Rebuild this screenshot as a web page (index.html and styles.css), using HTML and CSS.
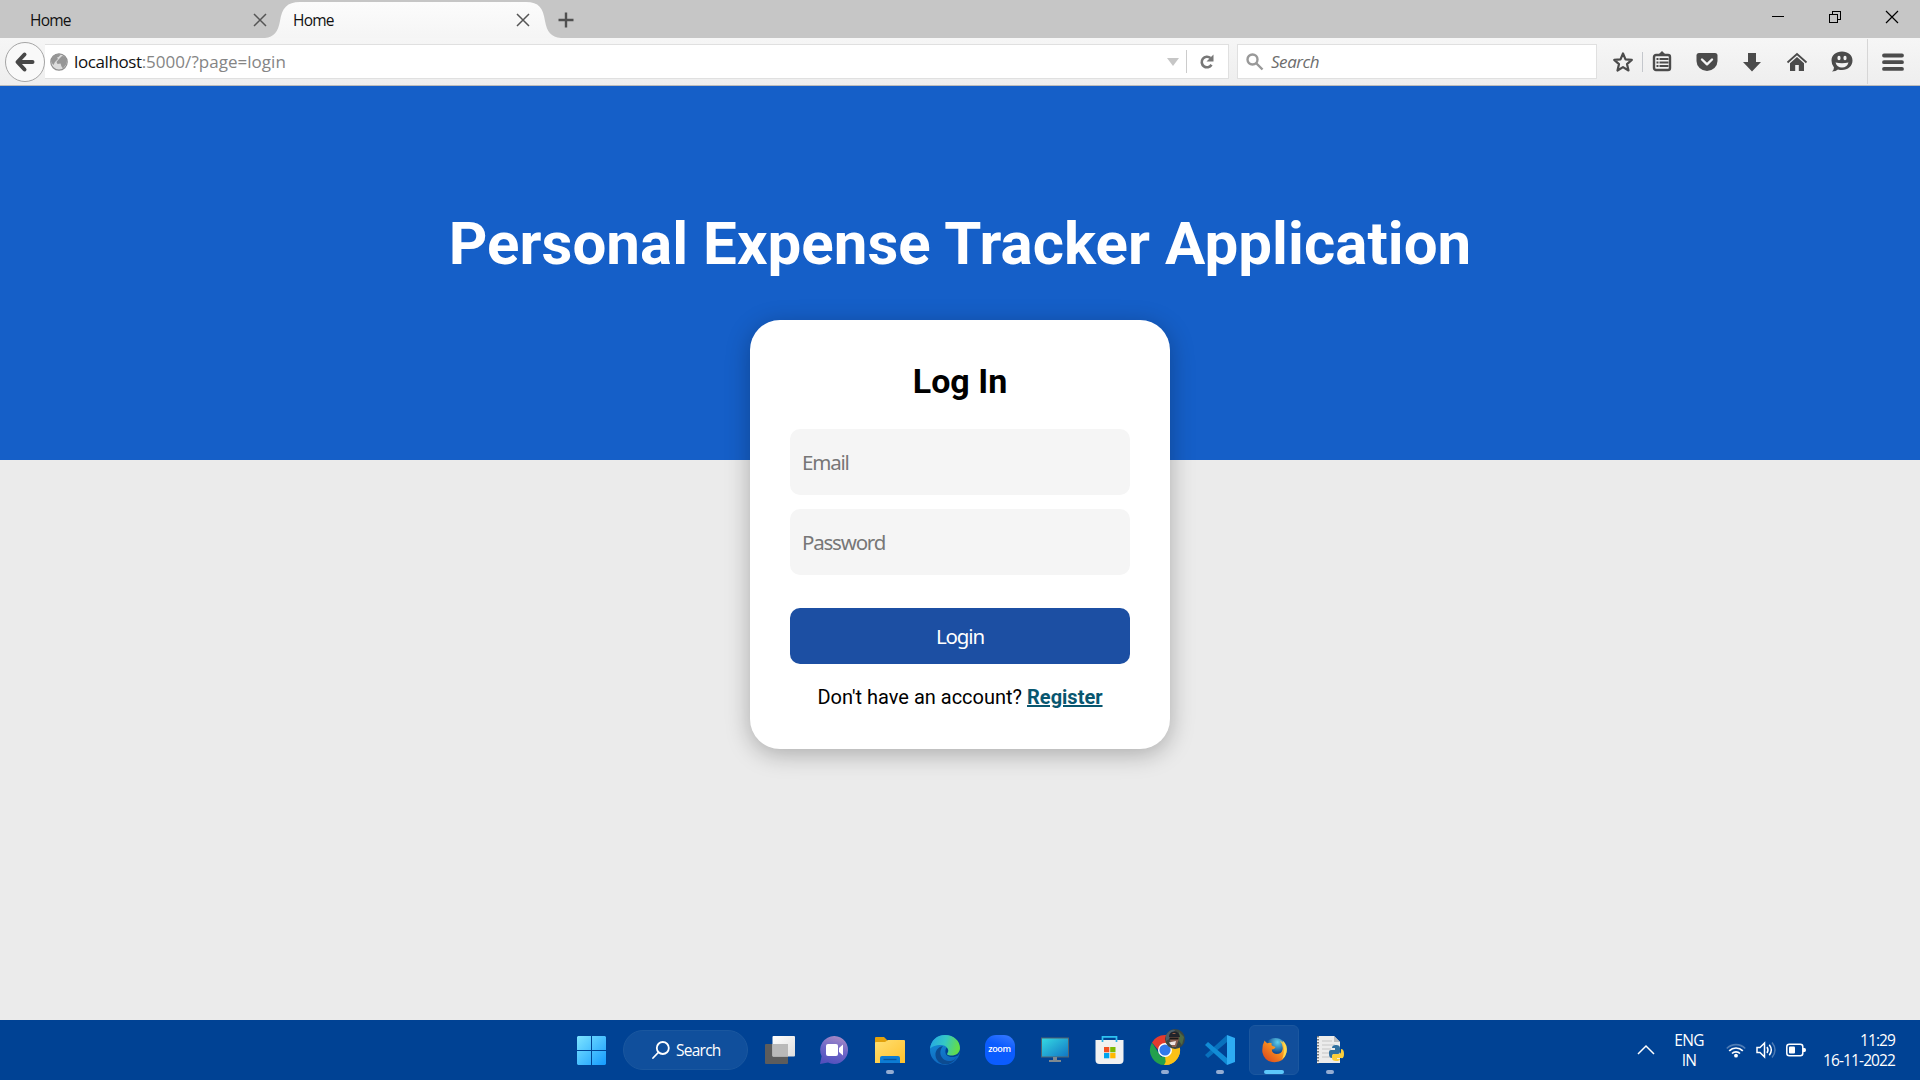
FILE: index.html
```html
<!DOCTYPE html>
<html lang="en">
<head>
<meta charset="utf-8">
<title>Home</title>
<link rel="stylesheet" href="styles.css">
</head>
<body>
<div class="desktop">
  <header class="browser">
    <div class="tabstrip">
      <div class="tab"><span class="tab-title">Home</span><svg class="tab-close" viewBox="0 0 14 14"><path d="M1 1l12 12M13 1L1 13"/></svg></div>
      <div class="tab active">
        <svg class="tab-shape" viewBox="0 0 296 36"><defs><linearGradient id="tabg" x2="0" y2="1"><stop offset="0" stop-color="#fcfcfc"/><stop offset="1" stop-color="#f5f5f5"/></linearGradient></defs><path fill="url(#tabg)" d="M0 36C9 35 13 30 15 19C17 6 22 0 35 0H261C274 0 278 6 280 19C282 30 286 35 296 36Z"/></svg>
        <span class="tab-title">Home</span><svg class="tab-close" viewBox="0 0 14 14"><path d="M1 1l12 12M13 1L1 13"/></svg>
      </div>
      <svg class="newtab" viewBox="0 0 16 16"><path d="M8 0.5v15M0.5 8h15"/></svg>
      <div class="winctl">
        <svg viewBox="0 0 14 14"><path d="M1 6.500h12"/></svg>
        <svg viewBox="0 0 14 14"><path d="M1.500 4.500h8v8h-8zM4.500 4.500V1.500H12.500V9.500H9.500"/></svg>
        <svg class="smooth" viewBox="0 0 14 14"><path d="M1 1l12 12M13 1L1 13"/></svg>
      </div>
    </div>
    <div class="toolbar">
      <div class="urlwrap">
        <div class="back"><svg viewBox="0 0 20 20"><path d="M9.500 2.500L2.500 10l7 7.500M3 10h14.500"/></svg></div>
        <div class="urlbar">
          <svg class="globe" viewBox="0 0 18 18"><circle cx="9" cy="9" r="8.200" fill="#dcdcdc" stroke="#8f8f8f" stroke-width="1.200"/><path fill="#969696" d="M1 8Q2 2 8 1l3 .5L8.500 4 7 4.500 8 6 5 9l-1.500 3-1-1zM9 6l3-3 3 .5 2 4-1 4-3 4-1.500-2-1-3-3 .5-1-2z"/></svg>
          <span class="url"><b>localhost</b>:5000/?page=login</span>
          <svg class="drop" viewBox="0 0 12 8"><path d="M0 0h12L6 8z"/></svg>
          <i class="urlsep"></i>
          <svg class="reload" viewBox="0 0 16 16"><path d="M11.500 4A5.300 5.300 0 1 0 12.500 10.800" fill="none" stroke="#777" stroke-width="2.600"/><path d="M14.500 .5V7.500H7.500z" fill="#777"/></svg>
        </div>
      </div>
      <div class="searchbar">
        <svg viewBox="0 0 18 18"><circle cx="6.500" cy="6.500" r="5" /><path d="M10.500 10.500l6 6"/></svg>
        <span>Search</span>
      </div>
      <div class="actions">
        <svg class="star" viewBox="0 0 22 22"><path d="M11 2.500l2.500 5.900 6.300.5-4.800 4.200 1.500 6.400L11 16.100l-5.500 3.400L7 13.100 2.200 8.900l6.300-.5z" fill="none" stroke="#4b4b4b" stroke-width="2.200" stroke-linejoin="round"/></svg>
        <i class="minisep"></i>
        <svg class="clip" viewBox="0 0 22 22"><path d="M7 4l4-4 4 4z" fill="#4b4b4b"/><rect x="3" y="4" width="16" height="15" rx="2" fill="none" stroke="#4b4b4b" stroke-width="2.400"/><path d="M5.500 8h2M5.500 11.500h2M5.500 15h2M8.500 8h9M8.500 11.500h9M8.500 15h9" stroke="#4b4b4b" stroke-width="1.900"/></svg>
        <svg class="pocket" viewBox="0 0 22 22"><path d="M3 2h16q2.500 0 2.500 2.500V10a10.500 10 0 0 1-21 0V4.500Q.5 2 3 2z" fill="#4b4b4b"/><path d="M6 8.500l5 4.800 5-4.800" fill="none" stroke="#f4f4f4" stroke-width="2.400" stroke-linecap="round" stroke-linejoin="round"/></svg>
        <svg class="down" viewBox="0 0 22 22"><path d="M7 2h8v9h5l-9 9.500L2 11h5z" fill="#4b4b4b"/></svg>
        <svg class="home" viewBox="0 0 22 22"><path d="M1.500 11.500L11 3l9.500 8.500" fill="none" stroke="#4b4b4b" stroke-width="1.800"/><path d="M11 6l7 6.300V20h-5.200v-6H9.200v6H4v-7.700z" fill="#4b4b4b"/></svg>
        <svg class="smile" viewBox="0 0 22 22"><path d="M11 .5C17 .5 21.500 4 21.500 9.500S17 19 11 19q-2 0-4-.6Q5 20.500 1 20.500q2-2 2-4.100Q.5 14 .5 9.500C.5 4 5 .5 11 .5z" fill="#4b4b4b"/><path d="M4.500 11.500Q6 16.500 11 16.500T17.500 11.500Q11 13 4.500 11.500z" fill="#f2f2f2"/><ellipse cx="8" cy="7" rx="1.600" ry="2.200" fill="#f2f2f2"/><ellipse cx="14" cy="7" rx="1.600" ry="2.200" fill="#f2f2f2"/></svg>
        <i class="menusep"></i>
        <svg class="burger" viewBox="0 0 22 22"><path d="M2 4.500h18M2 11.200h18M2 17.900h18" stroke="#4b4b4b" stroke-width="3.800" stroke-linecap="round"/></svg>
      </div>
    </div>
  </header>

  <main class="page">
    <section class="hero"><h1>Personal Expense Tracker Application</h1></section>
    <form class="card">
      <h2>Log In</h2>
      <input class="field" type="text" placeholder="Email">
      <input class="field" type="password" placeholder="Password">
      <button class="submit" type="button">Login</button>
      <p class="alt">Don't have an account? <a href="#">Register</a></p>
    </form>
  </main>

  <footer class="taskbar">
    <div class="apps">
      <div class="start"><svg viewBox="0 0 29 29"><defs><linearGradient id="wg" gradientUnits="userSpaceOnUse" x1="0" y1="0" x2="29" y2="29"><stop offset="0" stop-color="#7de4ff"/><stop offset="1" stop-color="#149bff"/></linearGradient></defs><path fill="url(#wg)" d="M1 0h13v14H0V1zM15 0h13l1 1v13H15zM0 15h14v14H1l-1-1zM15 15h14v13l-1 1H15z"/></svg></div>
      <div class="tsearch"><svg viewBox="0 0 18 18"><circle cx="10.800" cy="7" r="6"/><path d="M6.300 11.500L1 17"/></svg><span>Search</span></div>
      <div class="app"><svg viewBox="0 0 30 30"><defs><linearGradient id="tv" x2="1" y2="1"><stop offset="0" stop-color="#fff"/><stop offset="1" stop-color="#ddd"/></linearGradient></defs><rect y="9" width="23" height="20" rx="1" fill="#5c5c5c"/><rect x="7.500" y="1" width="22.500" height="20.500" rx="1" fill="url(#tv)"/><path d="M7.500 9H23v12.500H7.500z" fill="#b9b9b9"/></svg></div>
      <div class="app"><svg viewBox="0 0 30 30"><defs><linearGradient id="ch" x1=".7" x2=".4" y2="1"><stop offset="0" stop-color="#a98bc4"/><stop offset=".5" stop-color="#6d67c8"/><stop offset="1" stop-color="#5350bd"/></linearGradient></defs><path fill="url(#ch)" d="M14.500 1A14 14 0 1 1 8 27.600L0 29l1.600-7.800A14 14 0 0 1 14.500 1z"/><rect x="6" y="9" width="12" height="12" rx="2" fill="#fff"/><path d="M19 13l4-3.500v11l-4-3.500z" fill="#fff"/></svg></div>
      <div class="app running"><svg viewBox="0 0 30 30"><defs><linearGradient id="fo" x2="1" y2="1"><stop offset="0" stop-color="#ffdf72"/><stop offset="1" stop-color="#ffc12c"/></linearGradient></defs><path d="M0 3q0-1 1-1h8l4 4h6v8H0z" fill="#e2a10c"/><path d="M0 8q0-1 1-1l9 0 3-2h16q1 0 1 1V28H0z" fill="url(#fo)"/><path d="M5 28v-5q0-2 2-2h16q2 0 2 2v5z" fill="#0c7cd4"/><path d="M8.500 24.500h13" stroke="#07549c" stroke-width="1.300"/></svg></div>
      <div class="app"><svg viewBox="0 0 30 30"><defs><linearGradient id="e1" x2="1" y2=".2"><stop offset="0" stop-color="#23a5e8"/><stop offset=".55" stop-color="#35c8c4"/><stop offset="1" stop-color="#62dc4c"/></linearGradient><linearGradient id="e2" x2=".4" y2="1"><stop offset="0" stop-color="#1593dc"/><stop offset="1" stop-color="#0f66bd"/></linearGradient></defs><circle cx="15" cy="15" r="15" fill="url(#e2)"/><path fill="#0c4b91" d="M13 11c-6 7-1 16 8 15q4-1 5.500-3.500C22 31 10 32 6 23 4 16 8 12 13 11z"/><path fill="#004294" d="M16.500 12.500q-2 3-.5 7c4 4 9 2.500 12 1L30 17v-5z"/><path fill="url(#e1)" d="M0 14C1 5 7 0 15 0 24 0 30 6 30 13c0 5-4 7.500-8.500 7.500-4 0-5-1-4-2.500 2.500-3-1-8-6.500-8S1 12 0 14z"/></svg></div>
      <div class="app"><div class="zoom">zoom</div></div>
      <div class="app"><svg viewBox="0 0 30 30"><defs><linearGradient id="mo" x2="1" y2="1"><stop offset="0" stop-color="#35dbe3"/><stop offset="1" stop-color="#1174c4"/></linearGradient></defs><rect x="1.500" y="3" width="27" height="19" fill="url(#mo)" stroke="#52636f"/><path d="M13 22h4v3h4v2H9v-2h4z" fill="#7f8990"/></svg></div>
      <div class="app"><svg viewBox="0 0 30 30"><path d="M7.500 6V1.800h14V6" fill="none" stroke="#2ec3f2" stroke-width="1.700"/><path d="M.5 5h28v20q0 4-4 4h-20q-4 0-4-4z" fill="#f1f1f1"/><path d="M21.500 5v2M7.500 5v2" stroke="#2ab4e8" stroke-width="1.700"/><path fill="#f25022" d="M9 12h5.300v5.300H9z"/><path fill="#7fba00" d="M15.200 12h5.300v5.300h-5.300z"/><path fill="#00a4ef" d="M9 18h5.300v5.300H9z"/><path fill="#ffb900" d="M15.200 18h5.300v5.300h-5.300z"/></svg></div>
      <div class="app running"><svg viewBox="0 0 30 30"><path d="M15 15V0A15 15 0 0 1 15 30z" fill="#fbc116"/><path d="M2 7.500L11 22l4-1 1 9A15 15 0 0 1 2 7.500z" fill="#23a04c"/><path d="M2 7.500A15 15 0 0 1 28 7.500L15 8l-6 8z" fill="#e33b2e"/><path d="M21 18L14 30A15 15 0 0 0 28 7.500H15z" fill="#fbc116"/><circle cx="15" cy="15" r="7" fill="#fff"/><circle cx="15" cy="15" r="5.600" fill="#3279ea"/></svg>
        <svg class="avatar" viewBox="0 0 20 20"><circle cx="10" cy="10" r="10" fill="#3c4742"/><path d="M1 6Q5 0 10 1l-4 8-5 3z" fill="#4c5f6b"/><path d="M14 3l5 5-2 8-3-4z" fill="#4e6a45"/><path d="M4.500 9Q5 4 9 4t5 6l-3 8H7z" fill="#8c6150"/><path d="M4 8Q4 3 9 2.500T15 8z" fill="#20242b"/><path d="M7 5q2-2 4 0z" fill="#a8694c"/><path d="M4.500 9.500h9" stroke="#191919" stroke-width="2"/><path d="M4 13.500l7-1.500-1 4H6z" fill="#f0e8e5"/></svg></div>
      <div class="app running"><svg viewBox="0 0 30 30"><path d="M0 20l3 3L22 7V0z" fill="#0871bd"/><path d="M0 10l3-3 19 16v7z" fill="#118cd6"/><path d="M22 0l8 3v24l-8 3z" fill="#2eacf3"/></svg></div>
      <div class="app running current"><svg viewBox="0 0 30 30"><defs><radialGradient id="ff" cx=".6" cy=".2"><stop offset="0" stop-color="#5fd0ee"/><stop offset="1" stop-color="#114b91"/></radialGradient><linearGradient id="fx" x1="1" x2="0" y2="1"><stop offset="0" stop-color="#ffe14a"/><stop offset=".45" stop-color="#f58a1f"/><stop offset="1" stop-color="#d83d1d"/></linearGradient></defs><circle cx="16" cy="13" r="12" fill="url(#ff)"/><path fill="url(#fx)" d="M4 4q1 2 3 3 3-1 5 0-1 2 1 3l3 1q0 2-4 3 0 4 5 5 6 0 7-5 1-5-3-10 8 4 7 13-2 11-13 11T1.500 17Q1 9 4 4z"/><path d="M24 4q6 5 4.500 13-1 5-5 8 4-11 .5-21z" fill="#ffd94b"/></svg></div>
      <div class="app running"><svg viewBox="0 0 30 30"><path d="M2 1h17l6 6v21H2z" fill="#ececec"/><path d="M19 1v6h6z" fill="#bdbdbd"/><path d="M3 1v28" stroke="#555" stroke-width="1.500" stroke-dasharray="1.500 1.500"/><path d="M7 6h10M7 10h13M7 14h9M7 18h7M7 22h9" stroke="#c6c6c6"/><path d="M14 19v-2q0-2 2-2h4v-2h-3q0-3 4-3t4 3v4q0 2-2 2h-4q-2 0-2 4-3 0-3-4z" fill="#2f6f9f"/><path d="M26 14q3 0 3 5t-3 4h-4v1h3q0 2-4 2t-4-3v-2q0-2 2-2h5q2 0 2-3z" fill="#fbce3b"/></svg></div>
    </div>
    <div class="tray">
      <svg class="chev" viewBox="0 0 18 10"><path d="M1 9l8-8 8 8"/></svg>
      <div class="lang">ENG<br>IN</div>
      <svg class="wifi" viewBox="0 0 20 16"><g fill="none" stroke="#fff" stroke-width="1.700"><path opacity=".3" d="M.8 6.500a13 13 0 0 1 18.400 0"/><path d="M3.200 8.800a9.600 9.600 0 0 1 13.600 0M6 11.500a5.700 5.700 0 0 1 8 0"/></g><circle cx="10" cy="13.700" r="1.900" fill="#fff"/></svg>
      <svg class="vol" viewBox="0 0 20 18"><g fill="none" stroke="#fff" stroke-width="1.500"><path d="M1 6.500h3L8.500 2v14L4 11.500H1zM11 6q2 3 0 6M13.300 3.800q4 5.200 0 10.400"/><path opacity=".3" d="M16 1.500q6 7.500 0 15"/></g></svg>
      <svg class="bat" viewBox="0 0 20 14"><rect x=".8" y="1.300" width="16" height="11.400" rx="2.500" fill="none" stroke="#fff" stroke-width="1.500"/><rect x="3" y="3.500" width="6" height="7" rx="1" fill="#fff"/><path d="M17 5h1.500q1.500 0 1.500 2t-1.500 2H17z" fill="#fff"/></svg>
      <div class="clock">11:29<br><span>16-11-2022</span></div>
    </div>
  </footer>
</div>
</body>
</html>
```
FILE: styles.css
```css
* { box-sizing: border-box; }
body { margin: 0; overflow: hidden; }
svg { display: block; flex: none; overflow: visible; }
.desktop {
  width: 1920px; height: 1080px;
  display: flex; flex-direction: column;
  font-family: "Open Sans", "Noto Sans", sans-serif;
}

/* browser chrome */
.browser { height: 86px; flex: none; }
.tabstrip { height: 38px; background: #c6c6c6; display: flex; align-items: flex-start; }
.tab { width: 268px; height: 38px; padding: 2px 0 0 30px; display: flex; align-items: center; position: relative; }
.tab.active { width: 279px; padding-left: 25px; }
.tab-shape { position: absolute; left: -3px; top: 2px; width: 296px; height: 36px; }
.tab-title { width: 223px; font-size: 15.500px; line-height: 20px; letter-spacing: -0.8px; color: #111; position: relative; }
.tab-close { width: 14px; height: 14px; stroke: #555; stroke-width: 1.500; position: relative; }
.newtab { width: 16px; height: 16px; margin: 12px 0 0 11px; stroke: #505050; stroke-width: 2.400; }
.winctl { margin: 10px 21px 0 auto; display: flex; gap: 43px; }
.winctl svg { width: 14px; height: 14px; fill: none; stroke: #000; stroke-width: 1; shape-rendering: crispEdges; }
.winctl .smooth { shape-rendering: auto; stroke-width: 1.200; }
.toolbar {
  height: 48px; display: flex; align-items: center;
  padding: 0 15px 0 5px;
  background: linear-gradient(#f6f6f6, #eee);
  border-bottom: 1px solid #bcbcbc;
}
.urlwrap { width: 1224px; display: flex; align-items: center; }
.back {
  width: 40px; height: 40px; flex: none; border: 1px solid #a5a5a5; border-radius: 50%;
  background: #f9f9f9; display: flex; align-items: center; justify-content: center;
}
.back svg { width: 20px; height: 20px; fill: none; stroke: #484848; stroke-width: 4; stroke-linecap: round; stroke-linejoin: round; }
.urlbar, .searchbar { height: 35px; background: #fff; border: 1px solid #e0e0e0; display: flex; align-items: center; }
.urlbar { flex: 1; border-left: 0; padding: 0 13px 0 5px; }
.globe { width: 18px; height: 18px; }
.url { margin-left: 6px; font-size: 17px; letter-spacing: 0.03px; color: #858585; white-space: nowrap; }
.url b { font-weight: 400; color: #111; letter-spacing: -0.4px; }
.drop { width: 12px; height: 8px; margin-left: auto; fill: #c6c6c6; }
.urlsep { width: 1px; height: 23px; background: #ccc; margin: 0 12px 0 7px; }
.reload { width: 16px; height: 16px; }
.searchbar { width: 360px; margin-left: 8px; padding-left: 8px; }
.searchbar svg { width: 18px; height: 18px; fill: none; stroke: #999; stroke-width: 2.400; }
.searchbar span { margin-left: 7px; font-size: 17px; font-style: italic; color: #6d6d6d; letter-spacing: -0.45px; }
.actions { flex: 1; height: 46px; display: flex; align-items: center; margin-left: 15px; }
.actions svg { width: 22px; height: 22px; }
.minisep { width: 1px; height: 20px; background: #c4c7cc; margin: 0 8px; }
.pocket, .down, .home, .smile { margin-left: 23px; }
.menusep { width: 1px; height: 45px; background: #d6d6d6; margin: 0 14px; }

/* page */
.page { height: 934px; flex: none; background: #ebebeb; font-family: Roboto, sans-serif; }
.hero { height: 374px; background: #155fc8; padding-top: 123px; }
.hero h1 { margin: 0; font-size: 60px; line-height: 70px; font-weight: 700; letter-spacing: 0.06px; color: #fff; text-align: center; }
.card {
  width: 420px; height: 429px; margin: -140px auto 0; padding: 40px;
  position: relative; border-radius: 30px; background: #fff;
  box-shadow: 0 5px 25px rgba(0, 0, 0, .28);
}
.card h2 { margin: 0 0 27px; font-size: 34px; line-height: 42px; font-weight: 700; text-align: center; color: #000; }
.field {
  display: block; width: 340px; height: 66px; margin: 0 0 14px; padding: 0 12px;
  border: 0; border-radius: 10px; background: #f5f5f5;
  font: 20.500px "Noto Sans", sans-serif; letter-spacing: -1.2px;
}
.field::placeholder { color: #777; opacity: 1; }
.submit {
  display: block; width: 340px; height: 56px; margin: 33px 0 0; padding: 0;
  border: 0; border-radius: 10px; background: #1c4fa3; color: #fff;
  font: 20.500px "Noto Sans", sans-serif; letter-spacing: -1.1px;
}
.alt { margin: 20px 0 0; font-size: 20px; line-height: 26px; text-align: center; color: #000; white-space: nowrap; }
.alt a { font-weight: 700; color: #08566f; }

/* taskbar */
.taskbar { height: 60px; flex: none; background: #004294; display: flex; color: #fff; }
.apps { margin-left: 577px; display: flex; align-items: center; }
.start { width: 46px; }
.start svg { width: 29px; height: 29px; }
.tsearch { width: 125px; height: 40px; border-radius: 20px; background: #104f9c; border: 1px solid #1a579f; display: flex; align-items: center; padding-left: 28px; margin-right: 4px; }
.tsearch svg { width: 18px; height: 18px; fill: none; stroke: #fff; stroke-width: 1.800; stroke-linecap: round; }
.tsearch span { margin-left: 6px; font-size: 15.500px; letter-spacing: -0.75px; }
.app { width: 55px; height: 50px; position: relative; display: flex; align-items: center; justify-content: center; }
.app > svg { width: 30px; height: 30px; }
.running::after { content: ""; position: absolute; left: 24px; bottom: 1px; width: 8px; height: 4px; border-radius: 2px; background: #94add3; }
.current { width: 50px; margin: 0 3px 0 2px; border-radius: 6px; background: #114e9b; border: 1px solid #1b579f; }
.current > svg { width: 27px; height: 27px; }
.current::after { width: 20px; left: 14px; bottom: 0; background: #5cc8fb; }
.app .avatar { position: absolute; width: 20px; height: 20px; left: 28px; top: 4px; }
.zoom { width: 30px; height: 30px; border-radius: 11px; background: linear-gradient(200deg, #3b7cff, #0b5cff 40%); font: 600 9px "Open Sans", sans-serif; line-height: 28px; text-align: center; letter-spacing: -0.4px; }
.tray { margin-left: auto; padding-right: 24px; display: flex; align-items: center; }
.tray svg { fill: none; }
.chev { width: 18px; height: 10px; stroke: #fff; stroke-width: 1.500; }
.lang { width: 30px; margin-left: 19px; font-size: 15.500px; line-height: 20px; letter-spacing: -0.7px; text-align: center; }
.wifi { width: 20px; height: 16px; margin-left: 22px; }
.vol { width: 20px; height: 18px; margin-left: 10px; }
.bat { width: 20px; height: 14px; margin-left: 10px; }
.clock { width: 90px; padding-right: 1px; padding-bottom: 1px; text-align: right; font-size: 15.500px; line-height: 20px; letter-spacing: -0.9px; }
```
